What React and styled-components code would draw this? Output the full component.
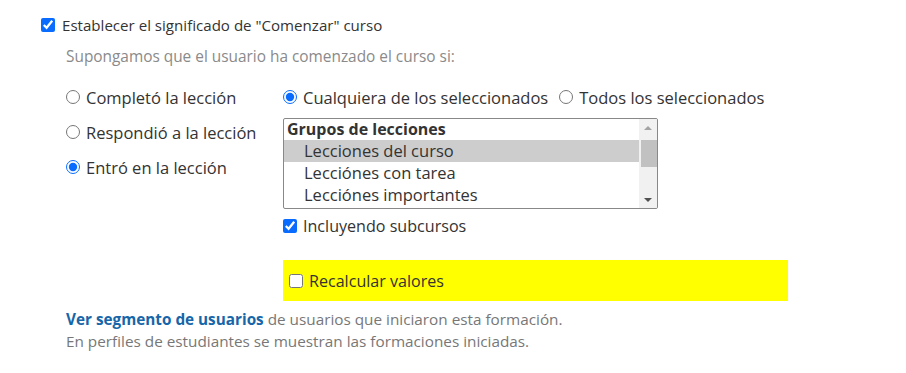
import React from "react";
import styled, { createGlobalStyle } from "styled-components";

const Global = createGlobalStyle`
  body {
    margin: 0;
    background: #fff;
    font-family: "Open Sans", "Liberation Sans", sans-serif;
    color: #333;
  }
  input {
    accent-color: #0a6cff;
  }
`;

const Page = styled.div`
  width: 906px;
  height: 373px;
  box-sizing: border-box;
  padding: 14px 0 0 41px;
`;

const TopLabel = styled.label`
  display: flex;
  align-items: center;
  gap: 7px;
  font-size: 15.1px;
  height: 22px;
  color: #333;
  input {
    margin: 0;
    width: 14px;
    height: 14px;
  }
`;

const Body = styled.div`
  padding-left: 25px;
`;

const Hint = styled.div`
  margin-top: 11px;
  font-size: 15.4px;
  line-height: 20px;
  color: #8a8a8a;
  height: 20px;
`;

const Options = styled.div`
  display: grid;
  grid-template-columns: 217px 1fr;
  margin-top: 19px;
`;

const LeftCol = styled.div`
  display: flex;
  flex-direction: column;
  gap: 13px;
`;

const Choice = styled.label`
  display: inline-flex;
  align-items: center;
  gap: 6px;
  height: 22px;
  font-size: ${(p) => p.$size || "16.5px"};
  color: #333;
  white-space: nowrap;
  input {
    margin: 0;
    width: 14px;
    height: 14px;
  }
`;

const RightCol = styled.div`
  display: flex;
  flex-direction: column;
`;

const Modes = styled.div`
  display: flex;
  gap: 11px;
`;

const ListBox = styled.div`
  margin-top: 10px;
  width: 375px;
  height: 91px;
  box-sizing: border-box;
  border: 1px solid #888;
  border-radius: 2px;
  display: flex;
  overflow: hidden;
`;

const ListItems = styled.div`
  flex: 1;
  display: flex;
  flex-direction: column;
`;

const GroupTitle = styled.div`
  font-size: 16px;
  font-weight: 700;
  height: 21px;
  line-height: 21px;
  padding-left: 3px;
  color: #333;
`;

const Item = styled.div`
  font-size: 16.5px;
  height: 22px;
  line-height: 22px;
  padding-left: 20px;
  color: #333;
  background: ${(p) => (p.$selected ? "#cdcdcd" : "transparent")};
`;

const Scrollbar = styled.div`
  width: 18px;
  background: #f1f1f1;
  display: flex;
  flex-direction: column;
  align-items: center;
  justify-content: space-between;
  padding: 7px 0 6px;
  box-sizing: border-box;
  position: relative;
`;

const Thumb = styled.div`
  position: absolute;
  top: 21px;
  left: 2px;
  width: 16px;
  height: 27px;
  background: #c1c1c1;
`;

const Arrow = styled.div`
  width: 0;
  height: 0;
  border-left: 4px solid transparent;
  border-right: 4px solid transparent;
  ${(p) =>
    p.$up
      ? "border-bottom: 4px solid #a3a3a3;"
      : "border-top: 4px solid #505050;"}
`;

const SubRow = styled.div`
  margin-top: 6px;
`;

const Highlight = styled.div`
  margin-top: 22px;
  width: 505px;
  height: 41px;
  background: #ffff00;
  display: flex;
  align-items: center;
  padding-left: 6px;
  box-sizing: border-box;
`;

const Footer = styled.div`
  margin-top: 7px;
  font-size: 15.3px;
  color: #777;
  line-height: 22px;
`;

const Link = styled.a`
  color: #1666a9;
  font-weight: 700;
  text-decoration: none;
`;

export default function App() {
  return (
    <Page>
      <Global />
      <TopLabel>
        <input type="checkbox" defaultChecked />
        Establecer el significado de "Comenzar" curso
      </TopLabel>
      <Body>
        <Hint>Supongamos que el usuario ha comenzado el curso si:</Hint>
        <Options>
          <LeftCol>
            <Choice>
              <input type="radio" name="cond" />
              Completó la lección
            </Choice>
            <Choice>
              <input type="radio" name="cond" />
              Respondió a la lección
            </Choice>
            <Choice>
              <input type="radio" name="cond" defaultChecked />
              Entró en la lección
            </Choice>
          </LeftCol>
          <RightCol>
            <Modes>
              <Choice>
                <input type="radio" name="mode" defaultChecked />
                Cualquiera de los seleccionados
              </Choice>
              <Choice>
                <input type="radio" name="mode" />
                Todos los seleccionados
              </Choice>
            </Modes>
            <ListBox>
              <ListItems>
                <GroupTitle>Grupos de lecciones</GroupTitle>
                <Item $selected>Lecciones del curso</Item>
                <Item>Lecciónes con tarea</Item>
                <Item>Lecciónes importantes</Item>
              </ListItems>
              <Scrollbar>
                <Arrow $up />
                <Thumb />
                <Arrow />
              </Scrollbar>
            </ListBox>
            <SubRow>
              <Choice $size="16.1px">
                <input type="checkbox" defaultChecked />
                Incluyendo subcursos
              </Choice>
            </SubRow>
            <Highlight>
              <Choice $size="16.1px">
                <input type="checkbox" />
                Recalcular valores
              </Choice>
            </Highlight>
          </RightCol>
        </Options>
        <Footer>
          <div>
            <Link href="#">Ver segmento de usuarios</Link> de usuarios que
            iniciaron esta formación.
          </div>
          <div>En perfiles de estudiantes se muestran las formaciones iniciadas.</div>
        </Footer>
      </Body>
    </Page>
  );
}
